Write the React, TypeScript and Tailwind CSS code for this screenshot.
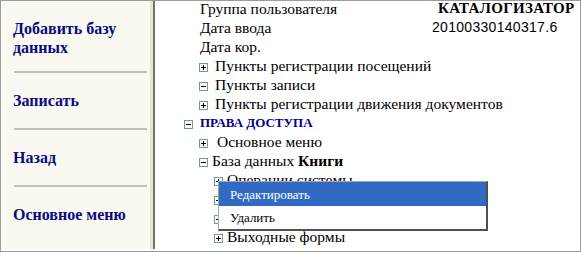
import React from "react"

function Box({ open }: { open?: boolean }) {
  return (
    <svg width="9" height="9" viewBox="0 0 9 9" shapeRendering="crispEdges" className="shrink-0">
      <rect x="0.5" y="0.5" width="8" height="8" fill="white" stroke="#6f9a9a" />
      <path d="M2 4.5h5" stroke="#000" />
      {!open && <path d="M4.5 2v5" stroke="#000" />}
    </svg>
  )
}

function SideLink({ children, className }: { children: React.ReactNode; className?: string }) {
  return (
    <div className={"pl-[11px] text-[16px] leading-[19px] font-bold text-[#0a0a80] " + (className ?? "")}>
      {children}
    </div>
  )
}

function Divider() {
  return <div className="ml-[12px] w-[133px] h-[2px] bg-[#c0c0c0]" />
}

export default function App() {
  return (
    <div className="w-[581px] h-[253px] bg-white font-['Liberation_Serif',serif]">
      <div className="w-[581px] h-[252px] border border-[#9c9c9c] flex pl-px">
        {/* left menu */}
        <div className="flex h-[248px]">
          <div className="w-[148px] bg-[#f9f9f1] pt-[18px]">
            <SideLink className="mb-[14px]">
              Добавить базу
              <br />
              данных
            </SideLink>
            <Divider />
            <SideLink className="my-[18px]">Записать</SideLink>
            <Divider />
            <SideLink className="my-[18px]">Назад</SideLink>
            <Divider />
            <SideLink className="my-[18px]">Основное меню</SideLink>
          </div>
          <div className="w-[3px] bg-[#e6e3d2]" />
          <div className="w-[2px] bg-[#77756a]" />
        </div>

        {/* tree */}
        <div className="relative flex-1 min-w-0 text-[15.5px] leading-[19px] text-black">
          <div className="h-[19px] flex items-center pl-[45px]">
            <span className="w-[238px] shrink-0 pb-[4px]">Группа пользователя</span>
            <span className="pb-[4px] font-bold text-[15px] tracking-[0.3px] whitespace-nowrap">КАТАЛОГИЗАТОР</span>
          </div>
          <div className="h-[19px] flex items-center pl-[45px]">
            <span className="w-[232px] shrink-0 pb-[4px]">Дата ввода</span>
            <span className="pb-[4px] font-['Liberation_Sans',sans-serif] text-[14px] tracking-[0.3px]">20100330140317.6</span>
          </div>
          <div className="h-[19px] flex items-center pl-[45px]">
            <span className="pb-[4px]">Дата кор.</span>
          </div>
          <div className="h-[19px] flex items-center pl-[44px] gap-[7px]">
            <Box />
            <span className="pb-[4px]">Пункты регистрации посещений</span>
          </div>
          <div className="h-[19px] flex items-center pl-[44px] gap-[7px]">
            <Box open />
            <span className="pb-[4px]">Пункты записи</span>
          </div>
          <div className="h-[19px] flex items-center pl-[44px] gap-[7px]">
            <Box />
            <span className="pb-[4px]">Пункты регистрации движения документов</span>
          </div>
          <div className="h-[19px] flex items-center pl-[29px] gap-[7px]">
            <Box open />
            <span className="pb-[4px] text-[13px] font-bold text-[#00008b]">ПРАВА ДОСТУПА</span>
          </div>
          <div className="h-[19px] flex items-center pl-[44px] gap-[9px]">
            <Box />
            <span className="pb-[4px]">Основное меню</span>
          </div>
          <div className="h-[19px] flex items-center pl-[44px] gap-[4px]">
            <Box open />
            <span className="pb-[4px]">
              База данных <b>Книги</b>
            </span>
          </div>
          <div className="h-[19px] flex items-center pl-[59px] gap-[4px]">
            <Box />
            <span className="pb-[4px]">Операции системы</span>
          </div>
          {/* rows hidden behind the menu: only their boxes peek out */}
          <div className="h-[19px] flex items-center pl-[59px]">
            <Box />
          </div>
          <div className="h-[19px] flex items-center pl-[59px]">
            <Box />
          </div>
          <div className="h-[19px] flex items-center pl-[59px] gap-[4px]">
            <Box />
            <span className="pb-[4px]">Выходные формы</span>
          </div>

          {/* context menu */}
          <div className="absolute left-[63px] top-[180px] w-[270px] bg-white border-t border-l border-[#a6a6a6] border-r-2 border-b-2 border-r-[#4f4f4f] border-b-[#4f4f4f] text-[13px]">
            <div className="h-[24px] flex items-center pl-[11px] bg-[#316ac5] text-white">Редактировать</div>
            <div className="h-[23px] flex items-center pl-[11px] text-black">Удалить</div>
          </div>
        </div>
      </div>
    </div>
  )
}
